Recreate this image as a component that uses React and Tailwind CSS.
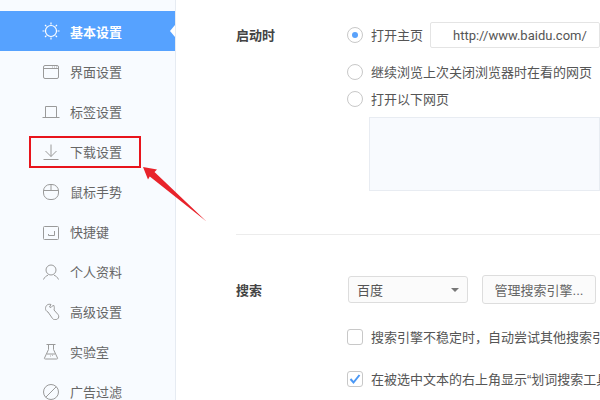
import React from 'react';

const S = { fill: 'none', stroke: '#9a9a9a', strokeWidth: 1 };

const icons = {
  sun: (
    <g fill="none" stroke="#fff" strokeWidth="1.2">
      <circle cx="9" cy="9" r="5.5" />
      <path d="M9 0.5v2M9 15.5v2M0.5 9h2M15.5 9h2M3 3l1.4 1.4M13.6 13.6L15 15M15 3l-1.4 1.4M4.4 13.6L3 15" />
    </g>
  ),
  window: (
    <g {...S}>
      <rect x="1.5" y="3.5" width="15" height="13" rx="1.5" />
      <path d="M1.5 6.500h15M10 5h.8M12 5h.8M14 5h.8" />
    </g>
  ),
  tab: (
    <g {...S}>
      <path d="M3.500 15.500V4.500h11v11M0.500 15.500h17" />
    </g>
  ),
  download: (
    <g {...S}>
      <path d="M9 2.500v12M3.500 9l5.500 5.500L14.500 9M1.500 17.500h15" />
    </g>
  ),
  mouse: (
    <g {...S}>
      <rect x="1.500" y="2.500" width="15" height="15" rx="6.500" />
      <path d="M1.500 8.500h15M9 2.500v6" />
    </g>
  ),
  keyboard: (
    <g {...S}>
      <rect x="1.500" y="4.500" width="15" height="13" rx="1" />
      <path d="M12.500 9v4.500H6.500M6.500 13.500v-1.500" />
    </g>
  ),
  user: (
    <g {...S}>
      <circle cx="9" cy="8" r="5" />
      <path d="M1.500 17.500C2.500 15 4.500 13.800 6 13.200M16.500 17.500C15.500 15 13.500 13.800 12 13.200" />
    </g>
  ),
  wrench: (
    <g {...S}>
      <path d="M9 2.500C6 1.500 3.500 3.500 3.500 6.500C3.500 8 4.500 9.500 6 10L10.500 16.500C11.500 18 14 18 15.500 17C17 16 17.200 14 16 12.500L12 8C12.500 6.500 12.500 4.500 11.500 3L9 5.500L7.500 5L9 2.500Z" />
    </g>
  ),
  flask: (
    <g {...S}>
      <path d="M4.500 2.500h9M6.500 2.500v5L2.500 16c-.3.700.2 1 .8 1h11.400c.6 0 1.100-.3.800-1L11.500 7.500v-5M5 12h8" />
      <path d="M8 14h.8M10 13.300h.8" />
    </g>
  ),
  block: (
    <g {...S}>
      <circle cx="9" cy="10" r="7.500" />
      <path d="M3.700 15.300L14.300 4.700" />
    </g>
  ),
};

const menu = [
  ['sun', '基本设置'],
  ['window', '界面设置'],
  ['tab', '标签设置'],
  ['download', '下载设置'],
  ['mouse', '鼠标手势'],
  ['keyboard', '快捷键'],
  ['user', '个人资料'],
  ['wrench', '高级设置'],
  ['flask', '实验室'],
  ['block', '广告过滤'],
];

function Radio({ checked }) {
  return (
    <span className="w-4 h-4 rounded-full border border-[#c8c8c8] bg-white flex items-center justify-center shrink-0">
      {checked && <span className="w-[6px] h-[6px] rounded-full bg-[#5aa2fb]" />}
    </span>
  );
}

export default function App() {
  return (
    <div
      className="relative w-[600px] h-[400px] overflow-hidden bg-white flex text-[13px] text-[#555]"
      style={{ fontFamily: '"Liberation Sans", "Noto Sans CJK SC", sans-serif' }}
    >
      <aside className="w-[176px] shrink-0 h-full bg-[#f8fbff] border-r border-[#e6ebf2] pt-[11px]">
        {menu.map(([icon, label], i) => (
          <div
            key={label}
            className={`relative h-10 pl-[42px] flex items-center gap-[10px] ${
              i === 0 ? 'bg-[#56a2ff] text-white font-bold' : 'text-[#666]'
            }`}
          >
            <svg width="18" height="18" viewBox="0 0 18 18" className="shrink-0">
              {icons[icon]}
            </svg>
            <span className="pt-[3px]">{label}</span>
            {i === 0 && (
              <span className="absolute right-0 top-[14px] w-0 h-0 border-y-[6px] border-y-transparent border-r-[5px] border-r-white" />
            )}
          </div>
        ))}
      </aside>

      <main className="flex-1 min-w-0 pl-[60px] pt-[22px]">
        <section className="flex">
          <div className="w-[111px] shrink-0 font-bold h-[26px] pt-[2px] flex items-center text-[#444]">启动时</div>
          <div className="flex-1 min-w-0">
            <div className="flex items-center h-[26px]">
              <Radio checked />
              <span className="ml-[8px] w-[52px] pt-[2px]">打开主页</span>
              <div
                className="ml-[7px] flex-1 h-[26px] border border-[#e4e4e4] rounded-[2px] pl-[22px] pt-[2px] flex items-center whitespace-nowrap overflow-hidden"
                style={{ fontFamily: 'Roboto, sans-serif' }}
              >
                http://www.baidu.com/
              </div>
            </div>
            <div className="flex items-center h-[20px] mt-[14px]">
              <Radio />
              <span className="ml-[8px] pt-[2px]">继续浏览上次关闭浏览器时在看的网页</span>
            </div>
            <div className="flex items-center h-[20px] mt-[7px]">
              <Radio />
              <span className="ml-[8px] pt-[2px]">打开以下网页</span>
            </div>
            <div className="ml-[22px] mt-[8px] h-[74px] bg-[#f8fafe] border border-[#e8ecf2]" />
          </div>
        </section>

        <div className="h-px bg-[#ececec] mt-[43px]" />

        <section className="flex mt-[40px]">
          <div className="w-[111px] shrink-0 font-bold h-[29px] pt-[2px] flex items-center text-[#444]">搜索</div>
          <div className="flex-1 min-w-0">
            <div className="flex items-center h-[29px] pl-px">
              <div className="w-[120px] h-[27px] border border-[#ddd] rounded-[3px] bg-[#fbfbfb] pl-[8px] pr-[8px] flex items-center justify-between">
                <span className="pt-[2px]">百度</span>
                <span className="w-0 h-0 border-x-[4px] border-x-transparent border-t-[4px] border-t-[#777]" />
              </div>
              <button className="ml-[14px] w-[114px] h-[29px] pt-[2px] border border-[#ddd] rounded-[3px] bg-[#fbfbfb] text-[#666]">
                管理搜索引擎...
              </button>
            </div>
            <div className="flex items-center h-[20px] mt-[23px] whitespace-nowrap">
              <span className="w-4 h-4 rounded-[3px] border border-[#c8c8c8] bg-white shrink-0" />
              <span className="ml-[8px] pt-[2px]">搜索引擎不稳定时，自动尝试其他搜索引擎</span>
            </div>
            <div className="flex items-center h-[20px] mt-[22px] whitespace-nowrap">
              <span className="w-4 h-4 rounded-[3px] border border-[#c8c8c8] bg-white shrink-0 flex items-center justify-center">
                <svg width="12" height="12" viewBox="0 0 12 12">
                  <path d="M1.500 6l3 3.500L10.500 2" fill="none" stroke="#4b98f5" strokeWidth="2" />
                </svg>
              </span>
              <span className="ml-[8px] pt-[2px]">在被选中文本的右上角显示“划词搜索工具栏”</span>
            </div>
          </div>
        </section>
      </main>

      {/* red annotation over the screenshot */}
      <div className="absolute left-[29px] top-[136px] w-[112px] h-[32px] border-2 border-[#e8141c]" />
      <svg width="600" height="400" className="absolute left-0 top-0 pointer-events-none">
        <path d="M143 167L157 169.500L154.500 172L206.500 221.500L149.800 176.500L148 179.500Z" fill="#e8232b" />
      </svg>
    </div>
  );
}
